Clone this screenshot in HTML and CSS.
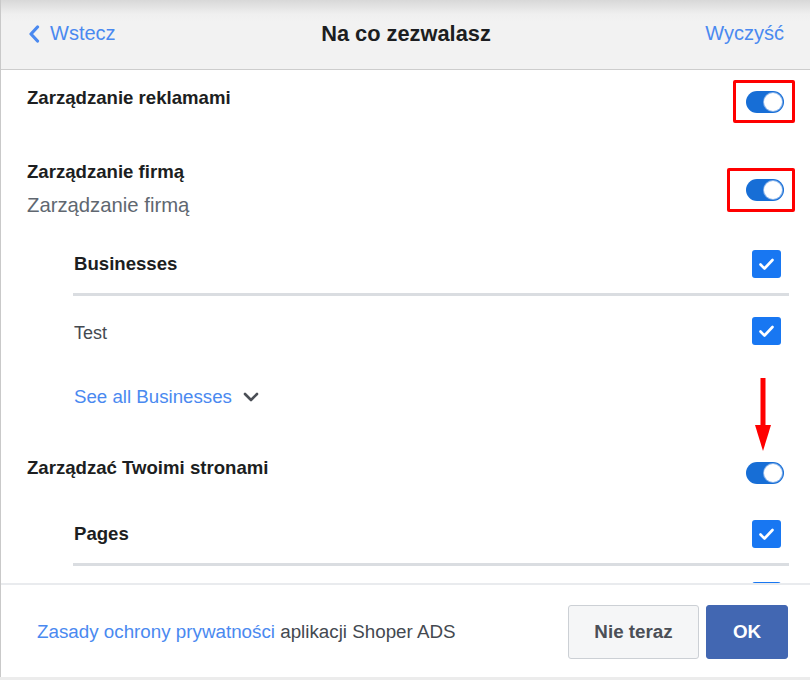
FILE: index.html
```html
<!DOCTYPE html>
<html lang="pl">
<head>
<meta charset="utf-8">
<title>Na co zezwalasz</title>
<link rel="stylesheet" href="styles.css">
</head>
<body>
<div class="dialog">
  <header class="topbar">
    <a class="back" href="#">
      <svg class="back-icon" width="12" height="18" viewBox="0 0 12 18"><polyline points="9.5,2 3,9 9.5,16" fill="none" stroke="currentColor" stroke-width="3.2" stroke-linecap="round" stroke-linejoin="round"/></svg>
      <span>Wstecz</span>
    </a>
    <h1 class="title">Na co zezwalasz</h1>
    <a class="clear" href="#">Wyczyść</a>
  </header>

  <main class="content">
    <div class="perm perm-ads">
      <div class="perm-text">
        <div class="perm-title">Zarządzanie reklamami</div>
      </div>
      <div class="switch-wrap switch-wrap-ads">
        <span class="switch"><span class="knob"></span></span>
        <span class="mark mark-ads"></span>
      </div>
    </div>

    <div class="perm perm-biz">
      <div class="perm-text">
        <div class="perm-title">Zarządzanie firmą</div>
        <div class="perm-sub">Zarządzanie firmą</div>
      </div>
      <div class="switch-wrap switch-wrap-biz">
        <span class="switch"><span class="knob"></span></span>
        <span class="mark mark-biz"></span>
      </div>
    </div>

    <div class="sublist">
      <div class="item item-head">
        <span class="item-label item-bold">Businesses</span>
        <span class="check"><svg width="29" height="28" viewBox="0 0 29 28"><polyline points="8.5,14.5 12.5,18.5 20.5,10" fill="none" stroke="#fff" stroke-width="2.6" stroke-linecap="round" stroke-linejoin="round"/></svg></span>
      </div>
      <div class="divider"></div>
      <div class="item item-entry">
        <span class="item-label">Test</span>
        <span class="check"><svg width="29" height="28" viewBox="0 0 29 28"><polyline points="8.5,14.5 12.5,18.5 20.5,10" fill="none" stroke="#fff" stroke-width="2.6" stroke-linecap="round" stroke-linejoin="round"/></svg></span>
      </div>
      <div class="item item-more">
        <a class="see-all" href="#">See all Businesses</a>
        <svg class="more-icon" width="16" height="10" viewBox="0 0 16 10"><polyline points="2,2 8,8 14,2" fill="none" stroke="#4b4f56" stroke-width="2.6" stroke-linecap="round" stroke-linejoin="round"/></svg>
      </div>
    </div>

    <div class="perm perm-pages">
      <div class="perm-text">
        <div class="perm-title">Zarządzać Twoimi stronami</div>
      </div>
      <div class="switch-wrap switch-wrap-pages">
        <span class="switch"><span class="knob"></span></span>
        <svg class="arrow" width="16" height="73" viewBox="0 0 16 73"><rect x="5.5" y="0" width="5" height="50" fill="#f00"/><polygon points="0,47 16,47 8,73" fill="#f00"/></svg>
      </div>
    </div>

    <div class="sublist">
      <div class="item item-head">
        <span class="item-label item-bold">Pages</span>
        <span class="check"><svg width="29" height="28" viewBox="0 0 29 28"><polyline points="8.5,14.5 12.5,18.5 20.5,10" fill="none" stroke="#fff" stroke-width="2.6" stroke-linecap="round" stroke-linejoin="round"/></svg></span>
      </div>
      <div class="divider"></div>
      <div class="item item-peek">
        <span class="check"></span>
      </div>
    </div>
  </main>

  <footer class="actions">
    <p class="policy"><a href="#">Zasady ochrony prywatności</a> aplikacji Shoper ADS</p>
    <div class="buttons">
      <button class="btn btn-secondary">Nie teraz</button>
      <button class="btn btn-primary">OK</button>
    </div>
  </footer>
</div>
</body>
</html>
```

FILE: styles.css
```css
* { box-sizing: border-box; }

html, body {
  margin: 0;
  padding: 0;
}

body {
  background: #ececec;
  font-family: "Liberation Sans", Arial, sans-serif;
  color: #1c1e21;
  width: 810px;
  height: 680px;
  overflow: hidden;
}

a { text-decoration: none; }

.dialog {
  width: 810px;
  height: 677px;
  background: #fff;
  border-left: 1px solid #c9c9c9;
  display: flex;
  flex-direction: column;
}

/* header */
.topbar {
  height: 70px;
  flex: none;
  display: grid;
  grid-template-columns: 1fr auto 1fr;
  align-items: center;
  padding: 0 26px 2px 27px;
  background: linear-gradient(#d8d8d8 0, #efefef 14px, #f2f2f2 22px, #f2f2f2 100%);
  border-bottom: 1px solid #cdcdcd;
}

.back {
  justify-self: start;
  display: flex;
  align-items: center;
  gap: 10px;
  color: #4a89f0;
  font-size: 20px;
}

.back-icon { display: block; }

.title {
  margin: 0;
  font-size: 21.8px;
  font-weight: bold;
  color: #1c1e21;
}

.clear {
  justify-self: end;
  color: #4a89f0;
  font-size: 20px;
}

/* content */
.content {
  height: 513px;
  flex: none;
  overflow: hidden;
}

.perm {
  display: flex;
  justify-content: space-between;
  align-items: flex-start;
  padding: 17px 26px 0 26px;
}

.perm-ads { height: 74px; }
.perm-biz { height: 90px; }
.perm-pages { height: 76px; padding-top: 29px; }

.perm-title {
  font-size: 18.6px;
  font-weight: bold;
  line-height: 22px;
  color: #1c1e21;
}

.perm-sub {
  margin-top: 11px;
  font-size: 20.3px;
  line-height: 22px;
  color: #606770;
}

.switch-wrap {
  position: relative;
  flex: none;
}

.switch-wrap-ads { margin-top: 4px; }
.switch-wrap-biz { margin-top: 18px; }
.switch-wrap-pages { margin-top: 5px; }

.switch {
  display: block;
  width: 38px;
  height: 22px;
  border-radius: 11px;
  background: #176ed6;
  position: relative;
}

.knob {
  position: absolute;
  right: 2px;
  top: 2px;
  width: 18px;
  height: 18px;
  border-radius: 50%;
  background: #fff;
  box-shadow: 0 0 0 1px #8ab4ea;
}

.mark {
  position: absolute;
  border: 3.5px solid #ff0000;
  border-radius: 2px;
}

.mark-ads { left: -13px; right: -11px; top: -11px; bottom: -10px; }
.mark-biz { left: -19px; right: -11px; top: -11px; bottom: -11px; }

.arrow {
  position: absolute;
  left: 9px;
  top: -84px;
}

/* sublists */
.sublist {
  margin-left: 72px;
  padding-right: 29px;
}

.item {
  display: flex;
  align-items: center;
  justify-content: space-between;
}

.item-head { height: 59px; }
.item-entry { height: 70px; }
.item-peek {
  height: 37px;
  align-items: flex-end;
  justify-content: flex-end;
}
.item-more {
  height: 62px;
  justify-content: flex-start;
  gap: 11px;
}

.item-label {
  font-size: 18px;
  color: #444950;
  padding-left: 1px;
}

.item-entry .item-label { padding-top: 4px; }

.item-bold {
  font-size: 18.6px;
  font-weight: bold;
  color: #1c1e21;
}

.check {
  width: 29px;
  height: 28px;
  border-radius: 3px;
  background: #1877f2;
  display: block;
  flex: none;
}

.item-peek .check { height: 21px; border-radius: 3px 3px 0 0; }

.check svg { display: block; }

.divider {
  height: 3px;
  background: #dadde1;
  margin-right: -8px;
}

.see-all {
  color: #4a89f0;
  font-size: 18.7px;
  padding-left: 1px;
}

.more-icon { display: block; }

/* footer */
.actions {
  flex: none;
  height: 94px;
  border-top: 2px solid #e9ebee;
  display: flex;
  align-items: center;
  justify-content: space-between;
  padding: 2px 22px 0 36px;
  background: #fff;
}

.policy {
  margin: 0;
  font-size: 18.8px;
  color: #444950;
}

.policy a { color: #4a89f0; }

.buttons {
  display: flex;
  gap: 7px;
}

.btn {
  height: 54px;
  border-radius: 3px;
  font-family: "Liberation Sans", Arial, sans-serif;
  font-size: 18.8px;
  font-weight: bold;
  cursor: pointer;
}

.btn-secondary {
  width: 131px;
  background: #f5f6f7;
  border: 1px solid #ccd0d5;
  color: #4b4f56;
}

.btn-primary {
  width: 82px;
  background: #4267b2;
  border: 1px solid #4267b2;
  color: #fff;
}
```
